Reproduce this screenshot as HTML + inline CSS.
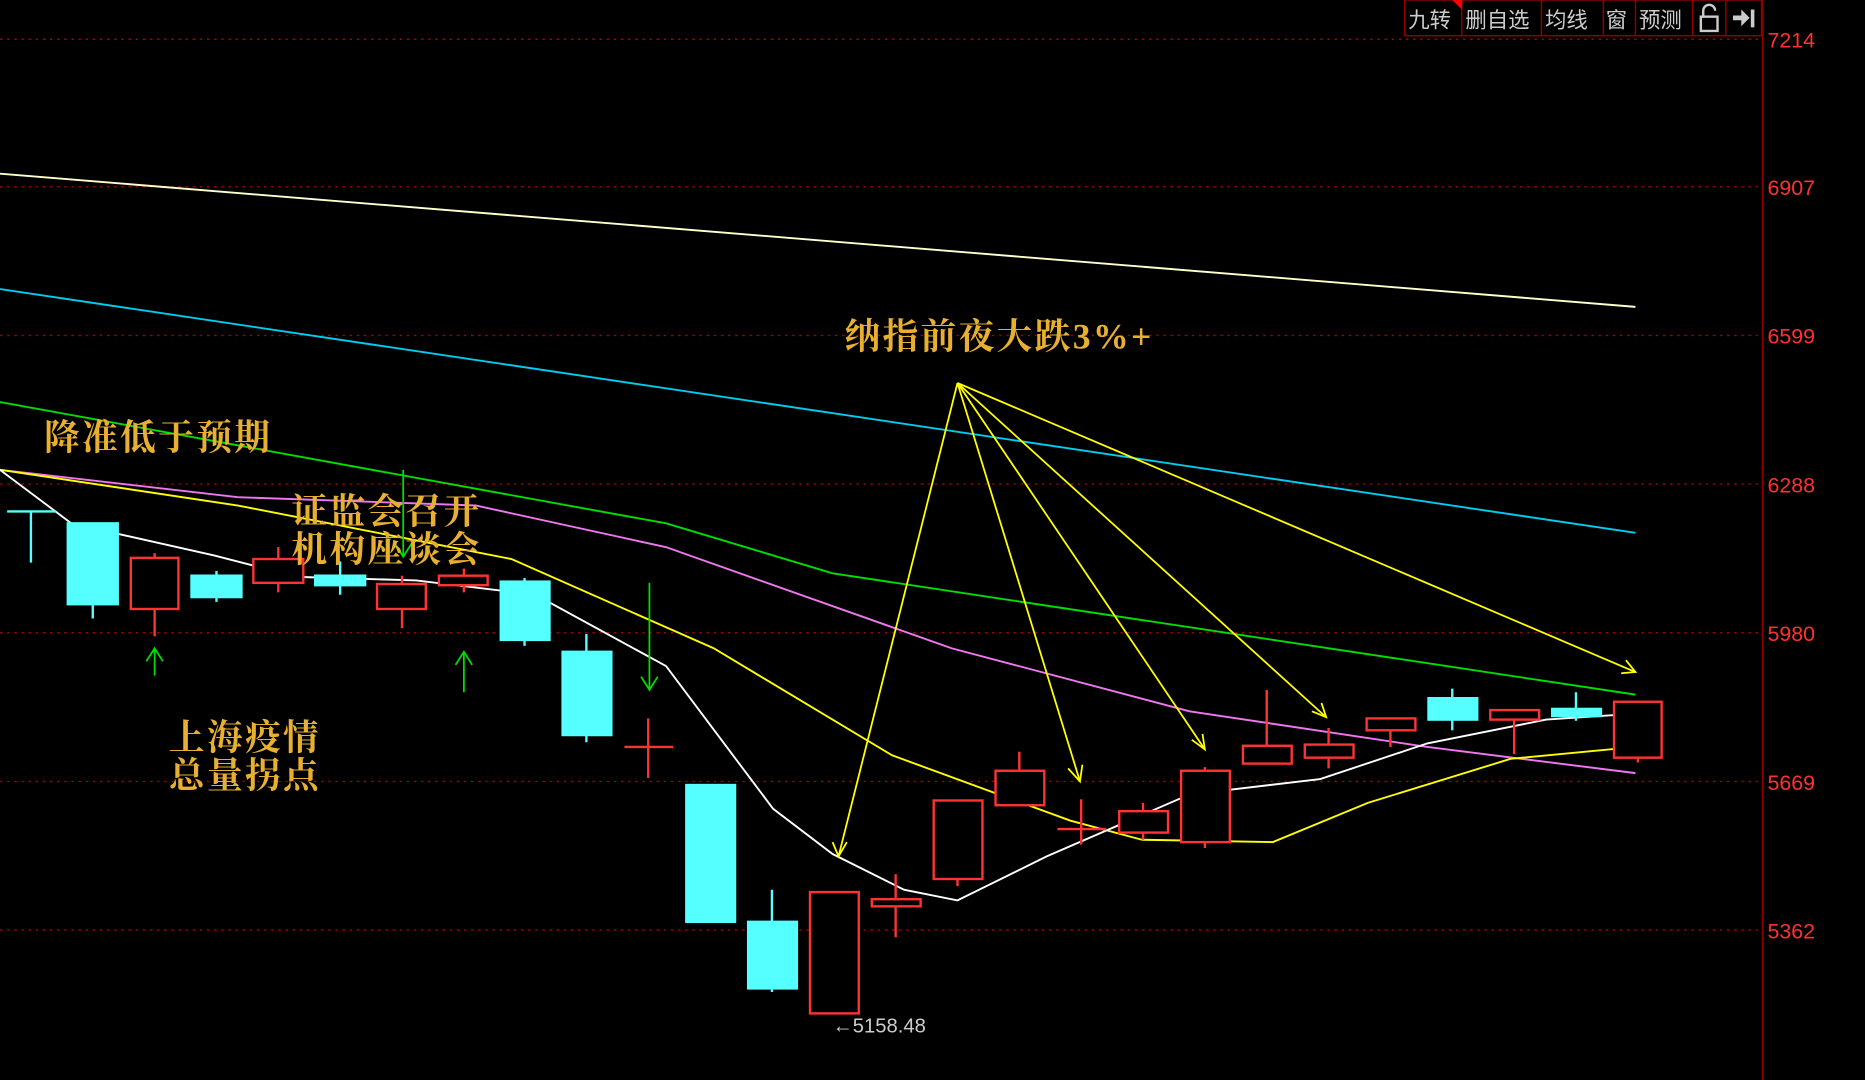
<!DOCTYPE html>
<html><head><meta charset="utf-8"><style>
html,body{margin:0;padding:0;background:#000;overflow:hidden}
svg{display:block}
.ax{font-family:"Liberation Sans",sans-serif;font-size:18px;fill:#ff3030}
.an{font-family:"Liberation Serif","Noto Serif CJK SC",serif;font-weight:bold;font-size:30px;letter-spacing:2px;fill:#e8b030}
.tb{font-family:"Liberation Sans","Noto Sans CJK SC",sans-serif;font-size:18px;fill:#cccccc}
</style></head><body>
<svg width="1865" height="1080" viewBox="0 0 1568 908" preserveAspectRatio="none" xmlns="http://www.w3.org/2000/svg">
<rect width="1568" height="908" fill="#000"/>
<g stroke="#a00000" stroke-width="1.2" stroke-dasharray="2,4">
<line x1="0" y1="33" x2="1481" y2="33"/><line x1="0" y1="157" x2="1481" y2="157"/>
<line x1="0" y1="282" x2="1481" y2="282"/><line x1="0" y1="407" x2="1481" y2="407"/>
<line x1="0" y1="532" x2="1481" y2="532"/><line x1="0" y1="657" x2="1481" y2="657"/>
<line x1="0" y1="782" x2="1481" y2="782"/>
</g>
<line x1="1482" y1="0" x2="1482" y2="908" stroke="#900000" stroke-width="1.5"/>
<g class="ax">
<text x="1486" y="40">7214</text><text x="1486" y="164">6907</text><text x="1486" y="289">6599</text>
<text x="1486" y="414">6288</text><text x="1486" y="539">5980</text><text x="1486" y="664">5669</text>
<text x="1486" y="789">5362</text>
</g>
<g fill="none" stroke="#900000" stroke-width="1.2">
<rect x="1181" y="0" width="300" height="30"/>
<line x1="1229" y1="0" x2="1229" y2="30"/><line x1="1296" y1="0" x2="1296" y2="30"/>
<line x1="1348" y1="0" x2="1348" y2="30"/><line x1="1375" y1="0" x2="1375" y2="30"/>
<line x1="1423" y1="0" x2="1423" y2="30"/><line x1="1451" y1="0" x2="1451" y2="30"/>
</g>
<polygon points="1221,0 1229,0 1229,8" fill="#ff0000"/>
<g class="tb"><text x="1184" y="23">九转</text><text x="1232" y="23">删自选</text><text x="1299" y="23">均线</text><text x="1350" y="23">窗</text><text x="1378" y="23">预测</text></g>
<rect x="1430" y="14" width="14" height="12" fill="none" stroke="#ccc" stroke-width="2"/>
<path d="M1432,14 V9 a5,5 0 0 1 10,0" fill="none" stroke="#ccc" stroke-width="2"/>
<path d="M1457,13 h7 v-5 l7,7 -7,7 v-5 h-7z" fill="#ccc"/><rect x="1472" y="8" width="3" height="15" fill="#ccc"/>
<g fill="none" stroke-width="1.6">
<polyline stroke="#ffffcc" points="0,146 1375,258"/>
<polyline stroke="#00ccee" points="0,243 1375,448"/>
<polyline stroke="#00dd00" points="0,338 560,440 700,482 1375,584"/>
<polyline stroke="#ee77ee" points="0,395 200,418 400,425 560,460 800,545 1000,598 1200,628 1375,650"/>
<polyline stroke="#ffff00" points="0,395 200,425 430,470 600,545 750,635 900,690 960,706 1070,708 1150,675 1270,638 1375,628"/>
<polyline stroke="#ffffff" points="0,395 60,440 180,467 250,485 350,488 450,500 560,560 650,680 700,718 760,748 805,757 880,720 1000,668 1110,655 1200,625 1300,605 1375,600"/>
</g>
<g stroke-width="2">
<g stroke="#55ffff" fill="#55ffff">
<line x1="6" y1="430" x2="47" y2="430"/><line x1="26" y1="430" x2="26" y2="473"/>
<line x1="78" y1="508" x2="78" y2="520"/><rect x="57" y="440" width="42" height="68"/>
<line x1="182" y1="480" x2="182" y2="506"/><rect x="161" y="484" width="42" height="18"/>
<line x1="286" y1="472" x2="286" y2="500"/><rect x="265" y="484" width="42" height="8"/>
<line x1="441" y1="486" x2="441" y2="543"/><rect x="421" y="489" width="41" height="49"/>
<line x1="493" y1="533" x2="493" y2="624"/><rect x="473" y="548" width="41" height="70"/>
<rect x="577" y="660" width="41" height="115"/>
<line x1="649" y1="748" x2="649" y2="834"/><rect x="629" y="775" width="41" height="56"/>
<line x1="1221" y1="579" x2="1221" y2="614"/><rect x="1201" y="587" width="41" height="18"/>
<line x1="1325" y1="582" x2="1325" y2="606"/><rect x="1305" y="596" width="41" height="6"/>
</g>
<g stroke="#ff3333" fill="#000">
<line x1="130" y1="465" x2="130" y2="535"/><rect x="110" y="469" width="40" height="43"/>
<line x1="234" y1="460" x2="234" y2="498"/><rect x="213" y="470" width="42" height="20"/>
<line x1="338" y1="484" x2="338" y2="528"/><rect x="317" y="491" width="41" height="21"/>
<line x1="390" y1="478" x2="390" y2="498"/><rect x="369" y="484" width="41" height="8"/>
<line x1="545" y1="604" x2="545" y2="654"/><line x1="525" y1="628" x2="566" y2="628"/>
<rect x="681" y="750" width="41" height="102"/>
<line x1="753" y1="735" x2="753" y2="788"/><rect x="733" y="756" width="41" height="6"/>
<line x1="805" y1="673" x2="805" y2="745"/><rect x="785" y="673" width="41" height="66"/>
<line x1="857" y1="632" x2="857" y2="648"/><rect x="837" y="648" width="41" height="29"/>
<line x1="909" y1="672" x2="909" y2="710"/><line x1="889" y1="697" x2="930" y2="697"/>
<line x1="961" y1="675" x2="961" y2="706"/><rect x="941" y="682" width="41" height="18"/>
<line x1="1013" y1="645" x2="1013" y2="713"/><rect x="993" y="648" width="41" height="60"/>
<line x1="1065" y1="580" x2="1065" y2="627"/><rect x="1045" y="627" width="41" height="15"/>
<line x1="1117" y1="612" x2="1117" y2="646"/><rect x="1097" y="626" width="41" height="11"/>
<line x1="1169" y1="614" x2="1169" y2="628"/><rect x="1149" y="604" width="41" height="10"/>
<line x1="1273" y1="605" x2="1273" y2="634"/><rect x="1253" y="597" width="41" height="8"/>
<line x1="1377" y1="637" x2="1377" y2="641"/><rect x="1357" y="590" width="40" height="47"/>
</g>
</g>
<g stroke="#ffff00" stroke-width="1.5" fill="none">
<line x1="805" y1="322" x2="705" y2="720"/><path d="M700,708 L705,720 L712,708"/>
<line x1="805" y1="322" x2="908" y2="657"/><path d="M898,646 L908,657 L910,643"/>
<line x1="805" y1="322" x2="1013" y2="630"/><path d="M1002,622 L1013,630 L1011,617"/>
<line x1="805" y1="322" x2="1115" y2="603"/><path d="M1103,598 L1115,603 L1111,591"/>
<line x1="805" y1="322" x2="1375" y2="565"/><path d="M1363,566 L1375,565 L1367,555"/>
</g>
<g stroke="#00dd00" stroke-width="1.5" fill="none">
<line x1="130" y1="545" x2="130" y2="568"/><path d="M123,556 L130,545 L137,556"/>
<line x1="390" y1="548" x2="390" y2="582"/><path d="M383,559 L390,548 L397,559"/>
<line x1="339" y1="395" x2="339" y2="468"/><path d="M332,457 L339,468 L346,457"/>
<line x1="546" y1="490" x2="546" y2="580"/><path d="M539,569 L546,580 L553,569"/>
</g>
<g class="an">
<text x="710" y="293">纳指前夜大跌3%+</text>
<text x="37" y="378">降准低于预期</text>
<text x="245" y="440">证监会召开</text>
<text x="245" y="472">机构座谈会</text>
<text x="142" y="630">上海疫情</text>
<text x="142" y="662">总量拐点</text>
</g>
<text x="700" y="868" font-family="Liberation Sans,sans-serif" font-size="17" fill="#cccccc">←5158.48</text>
</svg>
</body></html>
